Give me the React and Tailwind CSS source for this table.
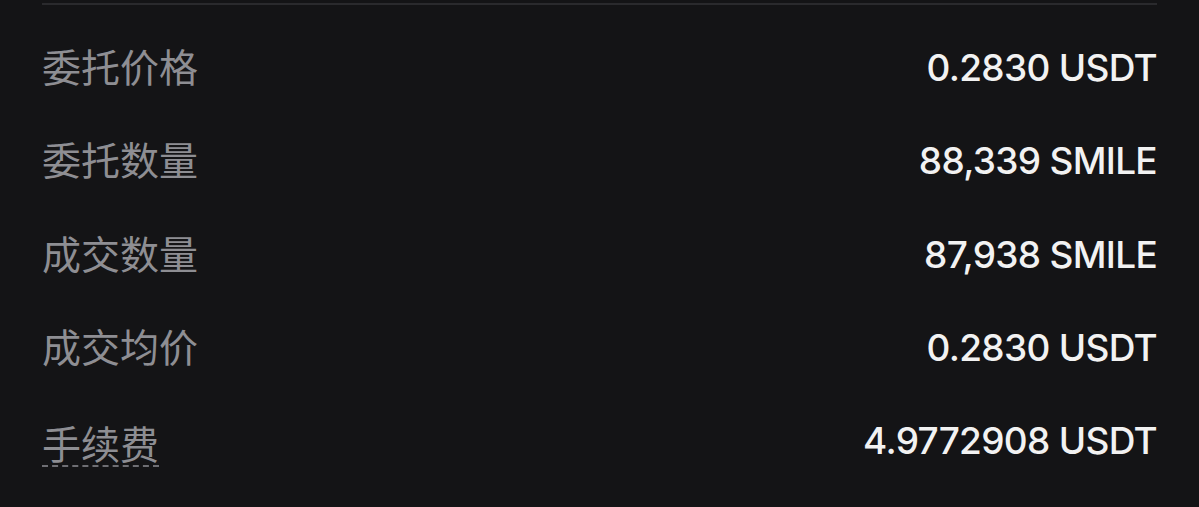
export default function App() {
  const rows = [
    { label: '委托价格', value: '0.2830 USDT' },
    { label: '委托数量', value: '88,339 SMILE' },
    { label: '成交数量', value: '87,938 SMILE' },
    { label: '成交均价', value: '0.2830 USDT' },
    { label: '手续费', value: '4.9772908 USDT', dashed: true },
  ];

  return (
    <div className="w-[1199px] h-[507px] bg-[#141416] px-[42px] pt-[3px] overflow-hidden">
      <div className="h-[2px] bg-[#2a2a2d]" />
      <div className="pt-[16px]">
        {rows.map((r, i) => (
          <div key={i} className="h-[93.3px] flex items-center justify-between">
            <span
              className={
                'text-[39px] leading-none text-[#8e8e93] [font-family:"Noto_Sans_CJK_SC",sans-serif] ' +
                (r.dashed ? 'border-b-2 border-dashed border-[#6e6e73] pb-[3px] mt-[8px]' : 'mb-[4px]')
              }
            >
              {r.label}
            </span>
            <span className="text-[37px] leading-none font-medium text-[#f2f2f2] tracking-[-0.7px] [font-family:Inter,sans-serif]">
              {r.value}
            </span>
          </div>
        ))}
      </div>
    </div>
  );
}
